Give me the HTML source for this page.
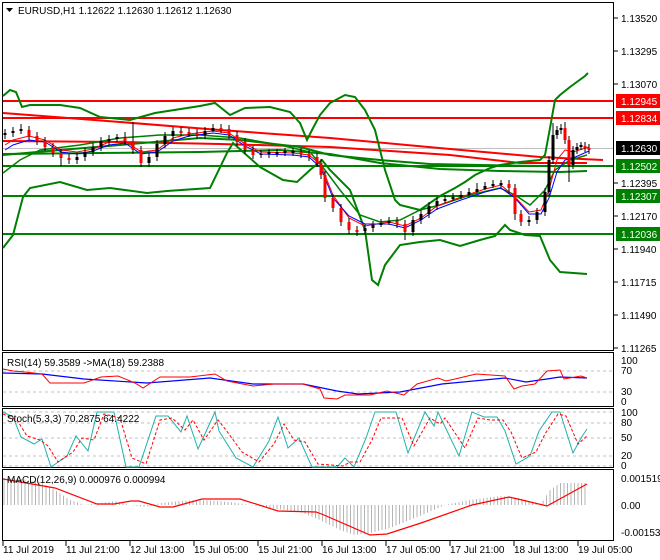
<!DOCTYPE html>
<html><head><meta charset="utf-8"><style>
html,body{margin:0;padding:0;background:#fff;}
svg{display:block;font-family:"Liberation Sans",sans-serif;}
text{font-size:10px;fill:#000;}
.w{fill:#fff}
</style></head><body>
<svg width="660" height="560" viewBox="0 0 660 560" xmlns="http://www.w3.org/2000/svg">
<defs>
<pattern id="hb" width="3.5" height="10" patternUnits="userSpaceOnUse"><rect x="0" y="0" width="1" height="10" fill="#b4b4b4"/></pattern>
</defs>
<rect width="660" height="560" fill="#fff"/>
<!-- panel frames -->
<g fill="none" stroke="#000" stroke-width="1">
<rect x="2.5" y="2.5" width="611" height="348"/>
<rect x="2.5" y="352.5" width="611" height="54"/>
<rect x="2.5" y="408.5" width="611" height="59"/>
<rect x="2.5" y="469.5" width="611" height="71"/>
</g>
<!-- main chart horizontal lines -->
<line x1="3" y1="148.5" x2="613" y2="148.5" stroke="#c0c0c0"/>
<g stroke="#ff0000" stroke-width="2" fill="none">
<line x1="3" y1="101" x2="613" y2="101"/>
<line x1="3" y1="118" x2="613" y2="118"/>
<polyline points="3,113 120,122 220,130 330,138 450,149 540,157 603,160"/>
<polyline points="3,141 120,142 220,144 330,147 450,155 520,163 587,163"/>
</g>
<g stroke="#008000" stroke-width="2" fill="none">
<line x1="3" y1="166" x2="613" y2="166"/>
<line x1="3" y1="196" x2="613" y2="196"/>
<line x1="3" y1="234" x2="613" y2="234"/>
<polyline points="3,154 100,153 200,152 280,150 330,154 380,163 440,169 500,171 560,172 587,171"/>
<polyline points="3,155 60,150 120,145 200,138 240,140 300,147 330,155 380,160 430,164 480,165 540,166 587,166"/>
<!-- upper band -->
<polyline points="3,96 10,90 16,92 22,107 30,105 60,105 80,108 100,117 130,120 155,113 200,106 215,103 230,115 245,108 270,107 290,112 300,123 307,140 312,130 320,115 330,103 345,95 355,97 365,110 375,130 385,170 395,200 400,205 420,210 430,203 440,196 455,188 465,182 475,175 490,168 500,165 520,162 540,160 545,155 550,128 555,100 560,95 570,87 585,76 588,73"/>
<!-- lower band -->
<polyline points="3,248 13,235 23,197 30,188 60,182 87,190 110,188 147,193 167,191 210,188 227,153 233,143 260,167 283,180 297,182 310,170 322,160 330,170 350,190 365,230 372,280 378,285 385,265 400,245 420,242 440,240 460,246 480,240 495,236 505,225 510,230 525,235 540,236 550,260 560,272 587,274"/>
<!-- middle band thin -->
<polyline stroke-width="1.5" points="3,173 20,160 40,150 80,145 120,138 160,135 200,135 240,138 280,145 310,152 325,170 340,190 360,215 380,222 400,220 420,210 440,205 470,195 500,188 515,195 530,205 545,190 555,170 570,160 587,155"/>
</g>
<!-- MAs -->
<polyline fill="none" stroke="#ff0000" stroke-width="1" points="5,145 13,140 29,136 45,140 61,150 77,152 93,149 109,142 125,141 141,152 157,150 173,138 189,134 213,131 229,133 245,144 261,152 293,153 309,155 321,165 333,195 349,218 365,226 389,222 405,226 421,218 437,206 461,197 485,189 501,185 515,197 529,212 541,210 549,190 557,160 565,150 573,152 589,147"/>
<polyline fill="none" stroke="#0000ff" stroke-width="1" points="5,150 13,145 29,140 45,142 61,152 77,154 93,151 109,145 125,143 141,154 157,152 173,141 189,136 213,133 229,135 245,146 261,154 293,155 309,157 321,168 333,198 349,216 365,224 389,224 405,228 421,220 437,209 461,200 485,192 501,188 515,198 529,214 541,214 549,198 557,172 565,160 573,158 589,151"/>
<!-- candle wicks -->
<path stroke="#000" stroke-width="1" fill="none" d="M5 129V139M13 127V137M21 124V134M29 126V140M37 132V145M45 137V151M53 143V157M61 149V166M69 154V164M77 153V164M85 148V161M93 143V156M101 137V151M109 135V145M117 134V142M125 132V145M133 122V154M141 146V167M149 153V167M157 140V161M165 132V148M173 127V140M181 127V136M189 128V137M197 129V139M205 127V139M213 124V132M221 124V133M229 125V139M237 131V146M245 138V154M253 146V159M261 150V158M269 149V158M277 149V157M285 148V156M293 148V156M301 148V158M309 150V161M317 153V167M321 159V179M325 171V202M333 194V212M341 204V226M349 218V234M357 226V236M365 224V235M373 221V232M381 219V227M389 217V225M397 217V228M405 220V240M413 216V236M421 210V224M429 202V218M437 197V210M445 195V203M453 193V201M461 191V199M469 188V196M477 183V193M485 182V190M493 180V188M501 180V188M509 180V194M515 184V220M521 210V226M529 216V226M537 208V224M545 188V216M549 156V196M553 123V164M557 126V139M561 124V134M565 122V144M569 136V182M573 146V169M577 143V154M581 142V150M585 142V152M589 144V154"/>
<!-- black bodies -->
<path stroke="#000" stroke-width="3" fill="none" d="M5 135V133M13 133V131M21 131V129M77 160V157M85 157V152M93 152V147M101 147V141M109 141V139M117 139V137M149 163V157M157 157V144M165 144V136M173 136V131M205 135V131M213 131V128M261 155V154M269 154V152M277 154V152M285 153V151M293 153V151M365 231V228M373 228V225M381 225V223M389 223V221M413 232V220M421 220V214M429 214V206M437 206V201M445 201V199M453 199V197M461 197V195M469 195V192M477 192V189M485 189V186M493 186V184M501 185V183M529 222V220M537 220V212M545 212V192M549 192V160M553 160V135M557 135V130M561 130V128M573 165V150M577 150V147M581 147V145"/>
<!-- red bodies -->
<path stroke="#ff0000" stroke-width="3" fill="none" d="M29 130V136M37 136V141M45 141V147M53 147V153M61 153V158M69 158V160M125 138V141M133 141V150M141 150V163M181 131V133M189 132V134M197 133V135M221 128V130M229 129V135M237 135V142M245 142V150M253 150V155M301 152V154M309 154V157M317 157V163M321 163V175M325 175V198M333 198V208M341 208V222M349 222V230M357 230V232M397 221V224M405 224V232M509 184V188M515 188V214M521 214V222M565 128V140M569 140V165M585 146V148M589 148V150"/>
<!-- header -->
<path d="M6 8h7l-3.5 4z" fill="#000"/>
<text x="18" y="14">EURUSD,H1  1.12622 1.12630 1.12612 1.12630</text>
<!-- price axis -->
<g stroke="#000"><path d="M614 18h4M614 51h4M614 84h4M614 183h4M614 216h4M614 249h4M614 282h4M614 315h4M614 348h4"/></g>
<text x="621" y="22">1.13520</text>
<text x="621" y="55">1.13295</text>
<text x="621" y="88">1.13070</text>
<text x="621" y="187">1.12395</text>
<text x="621" y="220">1.12170</text>
<text x="621" y="253">1.11940</text>
<text x="621" y="286">1.11715</text>
<text x="621" y="319">1.11490</text>
<text x="621" y="352">1.11265</text>
<rect x="616" y="94" width="44" height="14" fill="#ff0000"/><text class="w" x="621" y="105">1.12945</text>
<rect x="616" y="111" width="44" height="14" fill="#ff0000"/><text class="w" x="621" y="122">1.12834</text>
<rect x="616" y="141" width="44" height="14" fill="#000"/><text class="w" x="621" y="152">1.12630</text>
<rect x="616" y="159" width="44" height="14" fill="#008000"/><text class="w" x="621" y="170">1.12502</text>
<rect x="616" y="189" width="44" height="14" fill="#008000"/><text class="w" x="621" y="200">1.12307</text>
<rect x="616" y="227" width="44" height="14" fill="#008000"/><text class="w" x="621" y="238">1.12036</text>
<!-- RSI -->
<g stroke="#c0c0c0" stroke-dasharray="3,3"><line x1="3" y1="371" x2="613" y2="371"/><line x1="3" y1="392" x2="613" y2="392"/></g>
<polyline fill="none" stroke="#0000ff" stroke-width="1.2" points="3,373 42,374 84,379 147,383 210,378 253,384 303,384 337,391 358,394 400,392 442,384 505,378 526,382 547,379 560,377 587,378"/>
<polyline fill="none" stroke="#ff0000" stroke-width="1" points="3,369 13,371 25,372 42,374 50,383 84,383 101,377 118,376 135,383 143,388 160,377 190,377 215,374 227,381 253,386 274,384 303,384 320,389 324,398 337,399 345,395 370,395 387,391 404,395 417,384 438,378 446,381 455,379 476,374 505,376 514,389 522,386 535,384 547,371 560,370 564,379 581,376 587,378"/>
<text x="7" y="366">RSI(14) 59.3589  -&gt;MA(18) 59.2388</text>
<text x="621" y="364">100</text><text x="621" y="374">70</text><text x="621" y="395">30</text><text x="621" y="405">0</text>
<!-- Stoch -->
<g stroke="#c0c0c0" stroke-dasharray="3,3"><line x1="3" y1="412" x2="613" y2="412"/><line x1="3" y1="423" x2="613" y2="423"/><line x1="3" y1="438" x2="613" y2="438"/><line x1="3" y1="456" x2="613" y2="456"/><line x1="3" y1="466" x2="613" y2="466"/></g>
<polyline fill="none" stroke="#20b2aa" stroke-width="1" points="3,412 13,417 21,437 34,444 42,439 51,467 67,456 76,436 88,451 97,412 114,412 126,467 139,467 156,416 168,416 181,432 187,416 198,449 215,412 219,431 236,458 253,467 269,441 278,417 288,448 299,438 312,467 337,467 345,458 354,467 366,438 375,412 396,412 408,453 425,412 434,426 438,412 459,456 472,412 484,417 497,417 505,431 516,464 530,456 539,431 552,412 560,412 573,453 581,438 587,429"/>
<polyline fill="none" stroke="#ff0000" stroke-width="1" stroke-dasharray="3,2" points="3,414 17,420 27,436 40,440 48,446 58,462 73,452 82,438 94,440 104,414 120,418 132,458 146,464 160,420 172,418 185,430 193,420 204,440 218,420 226,430 242,452 259,462 274,444 284,424 294,440 305,442 318,464 343,466 350,462 360,462 372,440 381,418 402,418 414,446 430,418 440,424 445,418 465,448 478,418 490,420 503,420 511,432 522,458 536,452 545,434 558,414 566,416 578,444 587,436"/>
<text x="7" y="422">Stoch(5,3,3) 70.2875 64.4222</text>
<text x="621" y="416">100</text><text x="621" y="426">80</text><text x="621" y="441">50</text><text x="621" y="459">20</text><text x="621" y="469">0</text>
<!-- MACD -->
<polygon fill="url(#hb)" points="3,478 20,479 40,482 55,490 70,500 85,505 100,503 115,501 130,505 145,507 160,503 180,501 200,500 230,502 250,505 270,508 300,512 320,520 340,530 355,535 370,533 390,528 420,516 445,505 470,500 500,496 520,498 540,505 550,490 560,483 588,483 588,505 3,505"/>
<polyline fill="none" stroke="#ff0000" stroke-width="1.2" points="3,479 55,488 97,504 114,504 131,501 139,501 160,507 173,507 202,499 240,499 278,511 316,512 324,515 370,535 387,534 421,523 472,505 509,497 522,500 547,506 587,484"/>
<text x="7" y="483">MACD(12,26,9) 0.000976 0.000994</text>
<text x="621" y="482">0.001519</text><text x="621" y="509">0.00</text><text x="621" y="536">-0.001533</text>
<!-- time axis -->
<g stroke="#000"><path d="M3 541v5M66 541v5M130 541v5M194 541v5M258 541v5M322 541v5M386 541v5M450 541v5M514 541v5M578 541v5"/></g>
<text x="3" y="553">11 Jul 2019</text>
<text x="66" y="553">11 Jul 21:00</text>
<text x="130" y="553">12 Jul 13:00</text>
<text x="194" y="553">15 Jul 05:00</text>
<text x="258" y="553">15 Jul 21:00</text>
<text x="322" y="553">16 Jul 13:00</text>
<text x="386" y="553">17 Jul 05:00</text>
<text x="450" y="553">17 Jul 21:00</text>
<text x="514" y="553">18 Jul 13:00</text>
<text x="578" y="553">19 Jul 05:00</text>
</svg>
</body></html>
